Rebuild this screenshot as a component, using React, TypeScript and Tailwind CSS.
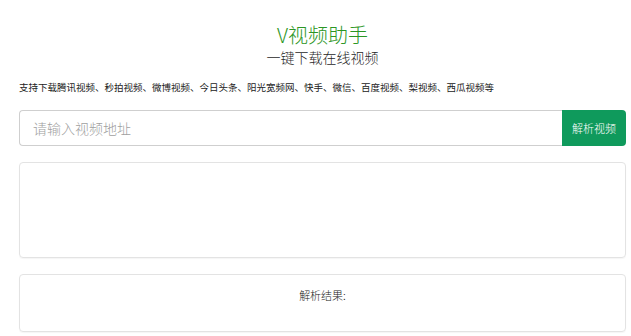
import React from "react";

export default function App() {
  const font = { fontFamily: '"Noto Sans CJK SC", "Microsoft YaHei", sans-serif' };
  return (
    <div className="w-[631px] h-[336px] bg-white overflow-hidden font-light" style={font}>
      <div className="ml-[19px] w-[607px] flex flex-col">
        <div className="mt-[24px] text-center text-[20px] leading-[22px] text-[#2b9624]">V视频助手</div>
        <div className="mt-[1px] text-center text-[14px] leading-[20px] text-[#1f1f1f]">一键下载在线视频</div>
        <div className="mt-[14px] text-[9.5px] leading-[12px] font-normal text-[#222]">
          支持下载腾讯视频、秒拍视频、微博视频、今日头条、阳光宽频网、快手、微信、百度视频、梨视频、西瓜视频等
        </div>
        <div className="mt-[17px] flex h-[36px]">
          <div className="flex-1 flex items-center border border-[#cfcfcf] border-r-0 rounded-l-[4px] pl-[13px] text-[14px] text-[#a0a0a0]">
            请输入视频地址
          </div>
          <button className="w-[64px] bg-[#0f9a5c] text-white text-[11px] font-light rounded-r-[4px]">解析视频</button>
        </div>
        <div className="mt-[16px] h-[96px] border border-[#e3e3e3] rounded-[4px] shadow-[0_1px_1px_rgba(0,0,0,0.04)]"></div>
        <div className="mt-[16px] h-[58px] border border-[#e3e3e3] rounded-[4px] pt-[12px] text-center text-[11px] leading-[16px] text-[#222] shadow-[0_1px_1px_rgba(0,0,0,0.04)]">
          解析结果:
        </div>
      </div>
    </div>
  );
}
